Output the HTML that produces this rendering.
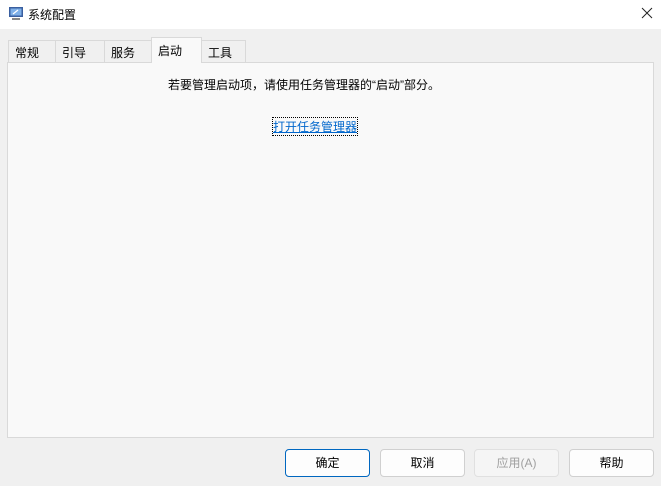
<!DOCTYPE html>
<html><head><meta charset="utf-8"><style>
*{margin:0;padding:0;box-sizing:border-box}
body{width:661px;height:486px;background:#f0f0f0;font-family:"Liberation Sans","Noto Sans CJK SC",sans-serif;font-size:12px;color:#000;position:relative;overflow:hidden}
.title{position:absolute;left:0;top:0;width:661px;height:29px;background:#fff}
.title span{position:absolute;left:28px;top:6px;font-size:12px}
.x{position:absolute;left:641px;top:7px}
.tab{position:absolute;top:40px;height:23px;border:1px solid #d9d9d9;border-bottom:none;background:#f0f0f0;font-size:12px;padding:3px 0 0 6px}
.tab.sel{top:37px;height:26px;background:#f9f9f9;z-index:2;padding-top:4px}
.panel{position:absolute;left:7px;top:62px;width:647px;height:376px;background:#f9f9f9;border:1px solid #d9d9d9}
.msg{position:absolute;left:168px;top:76px}
.link{position:absolute;left:273px;top:118px;color:#0066cc;text-decoration:underline;outline:1px dotted #000;outline-offset:0}
.btn{position:absolute;top:449px;width:85px;height:28px;border:1px solid #d0d0d0;border-radius:4px;background:#fdfdfd;text-align:center;line-height:26px}
</style></head><body>
<div class="title">
<svg style="position:absolute;left:8px;top:6px" width="16" height="16" viewBox="0 0 16 16"><rect x="1" y="1" width="14" height="10" fill="#3a5fa0"/><rect x="2.5" y="2.5" width="11" height="7" fill="#7fb0e8"/><path d="M5 8l5-4" stroke="#fff" stroke-width="1.2"/><rect x="4" y="12" width="8" height="2" fill="#888"/></svg>
<span>系统配置</span>
<svg class="x" width="12" height="12" viewBox="0 0 12 12"><path d="M1 1l10 10M11 1L1 11" stroke="#222" stroke-width="1"/></svg>
</div>
<div class="tab" style="left:8px;width:48px">常规</div>
<div class="tab" style="left:55px;width:50px">引导</div>
<div class="tab" style="left:104px;width:48px">服务</div>
<div class="tab sel" style="left:151px;width:51px">启动</div>
<div class="tab" style="left:201px;width:45px">工具</div>
<div class="panel"></div>
<div class="msg">若要管理启动项，请使用任务管理器的“启动”部分。</div>
<div class="link">打开任务管理器</div>
<div class="btn" style="left:285px;border-color:#0067c0">确定</div>
<div class="btn" style="left:380px">取消</div>
<div class="btn" style="left:474px;background:#f5f5f5;color:#a0a0a0;border-color:#e0e0e0">应用(A)</div>
<div class="btn" style="left:569px">帮助</div>
</body></html>
